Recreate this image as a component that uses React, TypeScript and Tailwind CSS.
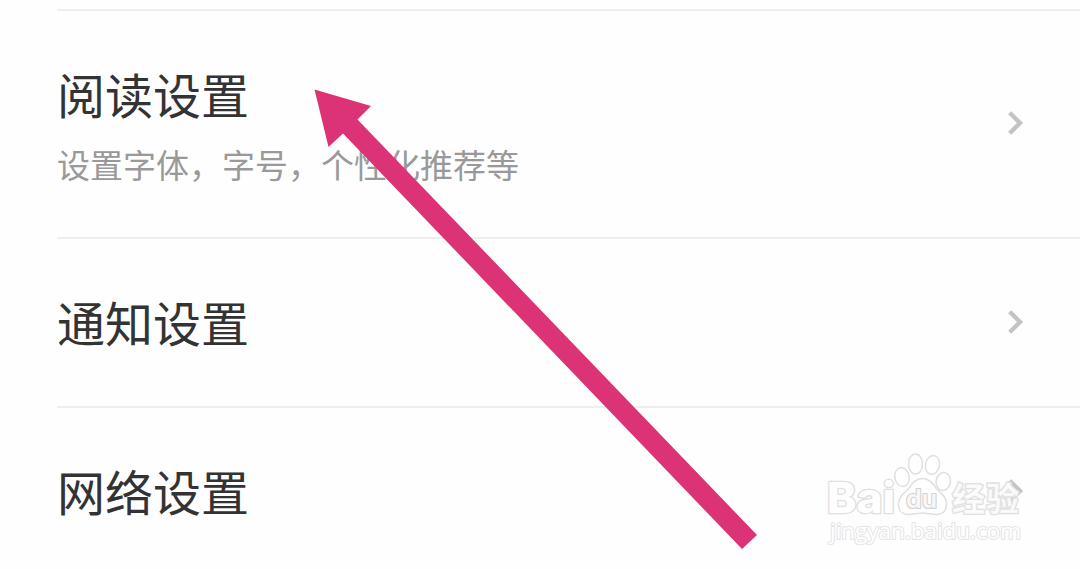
const rows = [
  { title: "阅读设置", desc: "设置字体，字号，个性化推荐等", height: "h-[228px]", offset: "pt-[6px]" },
  { title: "通知设置", desc: "", height: "h-[169px]", offset: "pb-[4px]" },
  { title: "网络设置", desc: "", height: "h-[169px]", offset: "pb-[4px]" },
];

function Chevron() {
  return (
    <svg
      className="mb-[2px]"
      width="16"
      height="24"
      viewBox="0 0 16 24"
      fill="none"
      stroke="#c3c3c3"
      strokeWidth="4.4"
    >
      <path d="M1.7 1.7 L12 12 L1.7 22.3" />
    </svg>
  );
}

function Arrow() {
  return (
    <svg className="absolute inset-0" width="1080" height="569" viewBox="0 0 1080 569">
      <polygon points="314.5,89.5 371,106 357.5,119.5 757,535 742,549 343,133.5 328.5,147" fill="#dc3376" />
    </svg>
  );
}

function Watermark() {
  return (
    <svg
      className="absolute left-[810px] top-[440px]"
      width="230"
      height="120"
      viewBox="0 0 230 120"
      fill="#ffffff"
      stroke="#e0e0e0"
      strokeWidth="2.6"
      strokeLinejoin="round"
      paintOrder="stroke"
      fontFamily="Inter, 'Noto Sans CJK SC', sans-serif"
      fontWeight="bold"
    >
      <text x="17" y="73" fontSize="42" fontWeight="800" textLength="68" lengthAdjust="spacingAndGlyphs">
        Bai
      </text>
      <g strokeWidth="1.5" fillOpacity="0.6" paintOrder="normal">
        <ellipse cx="92" cy="37" rx="7.2" ry="9.5" transform="rotate(-10 92 37)" />
        <ellipse cx="105.5" cy="24" rx="7" ry="10" />
        <ellipse cx="122.5" cy="25" rx="7" ry="9.5" transform="rotate(12 122.5 25)" />
        <ellipse cx="133.3" cy="41.5" rx="7.2" ry="9" transform="rotate(10 133.3 41.5)" />
        <path d="M112.500 38.500 C106 38.500 102.500 43 99 48 C95 53 88.500 56 88.500 64 C88.500 71 93 74.500 99 74.500 C104 74.500 108 73 112.500 73 C117 73 121 74.500 126 74.500 C132 74.500 136.500 71 136.500 64 C136.500 56 130 53 126 48 C122.500 43 119 38.500 112.500 38.500 Z" />
      </g>
      <text
        x="96"
        y="68"
        fontSize="25"
        fontWeight="600"
        textLength="31"
        lengthAdjust="spacingAndGlyphs"
        fill="#f7f7f7"
        strokeWidth="2.2"
        stroke="#d3d3d3"
      >
        du
      </text>
      <text x="142" y="71" fontSize="33" textLength="67" fillOpacity="0.8" fontFamily="'Noto Sans CJK SC', sans-serif">
        经验
      </text>
      <text
        x="20"
        y="99"
        fontSize="22"
        textLength="191"
        lengthAdjust="spacingAndGlyphs"
        fontFamily="'Open Sans', sans-serif"
        fontWeight="500"
        strokeWidth="2.2"
        stroke="#e6e6e6"
      >
        jingyan.baidu.com
      </text>
    </svg>
  );
}

export default function App() {
  return (
    <div className="relative h-[569px] w-[1080px] overflow-hidden bg-[#fefefe] pt-[9px] pl-[57px] font-['Noto_Sans_CJK_SC',sans-serif]">
      {rows.map((row) => (
        <div
          key={row.title}
          className={`flex items-center justify-between border-t-2 border-[#eeeeee] pr-[56px] ${row.height}`}
        >
          <div className={row.offset}>
            <h2 className="text-[48px] leading-[64px] text-[#333333]">{row.title}</h2>
            {row.desc && <p className="mt-[10px] text-[33px] leading-[58px] text-[#999999]">{row.desc}</p>}
          </div>
          <Chevron />
        </div>
      ))}
      <Arrow />
      <Watermark />
    </div>
  );
}
